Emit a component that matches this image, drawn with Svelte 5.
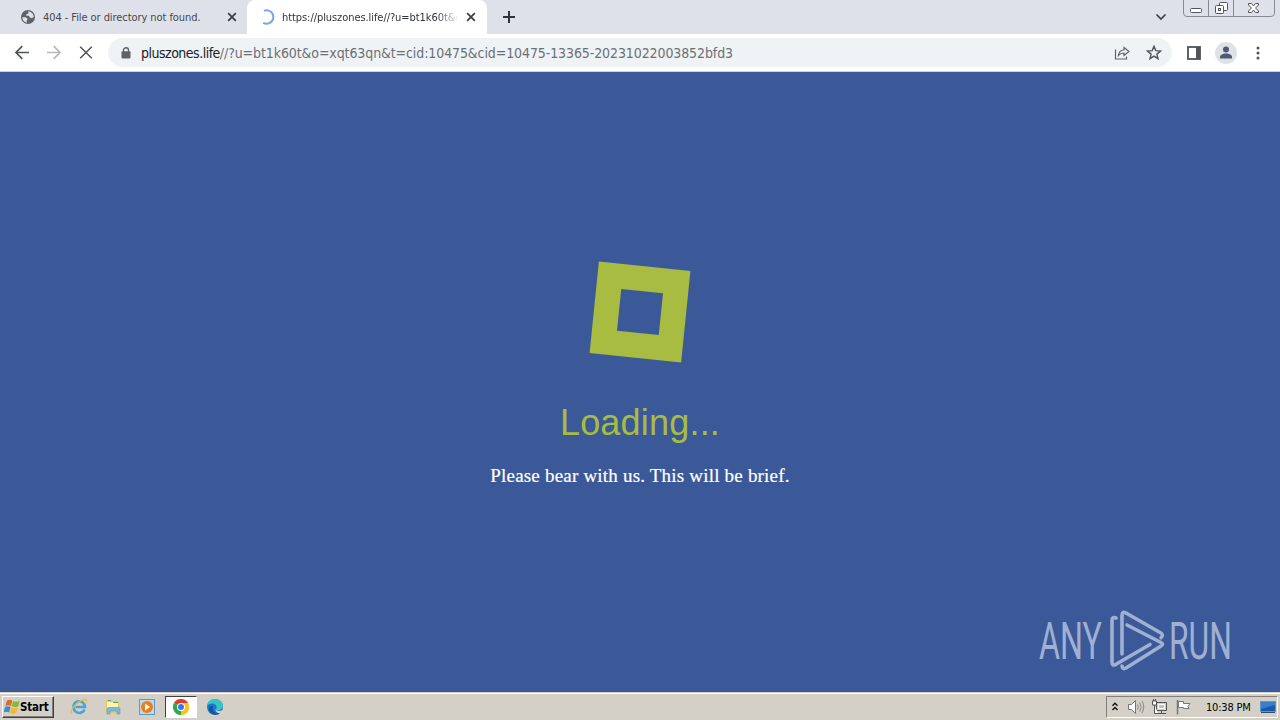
<script>
    let tabs = $state([
        { title: "404 - File or directory not found.", active: false },
        { title: "https://pluszones.life//?u=bt1k60t&o", active: true },
    ])
    let host = "pluszones.life"
    let path = "//?u=bt1k60t&o=xqt63qn&t=cid:10475&cid=10475-13365-20231022003852bfd3"
    let clock = "10:38 PM"
</script>

<main class="screen">
    <header class="tabstrip">
        {#each tabs as tab}
            <div class="tab" class:active={tab.active}>
                {#if tab.active}
                    <svg class="favicon" viewBox="0 0 16 16"><path d="M5 1.700A6.800 6.800 0 1 1 4.200 13.900" fill="none" stroke="#7aa7ea" stroke-width="2" /></svg>
                {:else}
                    <svg class="favicon" viewBox="0 0 16 16">
                        <circle cx="8" cy="8" r="7" fill="#5f6368" />
                        <path d="M2.300 8.200h3.400l2 1.700-1 1.500v2.300C4.100 13.100 2.300 11 2.300 8.200zM8 2.400c3.300 0 5.700 2.500 5.700 5.400l-1.600 1.400-2.200-.7-1-1.800H6.400l-.3-1.300 2.400-1z" fill="#dee1e9" />
                    </svg>
                {/if}
                <span class="title">{tab.title}</span>
                <svg class="close" viewBox="0 0 10 10"><path d="M1.200 1.200l7.600 7.600M8.800 1.200L1.200 8.800" stroke="#3c4043" stroke-width="1.800" /></svg>
            </div>
        {/each}
        <svg class="plus" viewBox="0 0 12 12"><path d="M6 0v12M0 6h12" stroke="#303338" stroke-width="2" /></svg>
        <svg class="chevron" viewBox="0 0 12 8"><path d="M1.500 1.500L6 6l4.500-4.500" fill="none" stroke="#3c4043" stroke-width="1.700" /></svg>
        <svg class="winbuttons" viewBox="0 0 94 17">
            <path d="M1.500 0v13q0 3.500 3.500 3.500h84q3.500 0 3.500-3.500V0M26.500 0v16M51.500 0v16" fill="none" stroke="#868a93" />
            <g fill="#fff" stroke="#50545c">
                <rect x="8.500" y="8.500" width="11" height="4" rx="1" />
                <rect x="37.500" y="2.500" width="8" height="8" rx="1" />
                <rect x="33.500" y="5.500" width="8" height="8" rx="1" />
                <rect x="36.500" y="8.500" width="2" height="2" />
                <path d="M66.500 3.500h3l2 2.500 2-2.500h3v1.500l-3 3 3 3v1.500h-3l-2-2.500-2 2.500h-3v-1.500l3-3-3-3z" />
            </g>
        </svg>
    </header>

    <nav class="toolbar">
        <svg class="nav" viewBox="0 0 16 16"><path d="M15 7.500H2M8.300 1.200L2 7.500l6.300 6.300" fill="none" stroke="#505357" stroke-width="1.700" /></svg>
        <svg class="nav" viewBox="0 0 16 16"><path d="M1 7.500h13M7.700 1.200L14 7.500l-6.300 6.300" fill="none" stroke="#b5b7ba" stroke-width="1.700" /></svg>
        <svg class="nav" viewBox="0 0 16 16"><path d="M2.200 1.700l11.600 11.600M13.800 1.700L2.200 13.300" stroke="#505357" stroke-width="1.500" /></svg>
        <div class="omnibox">
            <svg class="lock" viewBox="0 0 10 12"><path d="M2.500 5V3.300a2.500 2.500 0 0 1 5 0V5" fill="none" stroke="#5f6368" stroke-width="1.400" /><rect x=".5" y="4.300" width="9" height="7.200" rx="1" fill="#5f6368" /></svg>
            <span class="url"><b>{host}</b>{path}</span>
            <svg class="share" viewBox="0 0 16 16"><path d="M1.500 4.500v9.500h11V11.500M4.500 10.500c.4-3.700 2.500-5.400 5.500-5.500V2.500l5 4-5 4V8c-2.500 0-4 .6-5.500 2.500z" fill="none" stroke="#5f6368" stroke-width="1.200" /></svg>
            <svg class="star" viewBox="0 0 16 16"><path d="M8 1.300l1.800 4.300 4.700.4-3.600 3.100 1.100 4.600L8 11.200l-4 2.500 1.100-4.600L1.500 6l4.700-.4z" fill="none" stroke="#505357" stroke-width="1.400" /></svg>
        </div>
        <svg class="panel" viewBox="0 0 14 14"><rect x="1" y="1" width="12" height="12" fill="#fff" stroke="#505357" stroke-width="1.800" /><path d="M9 1h4v12H9z" fill="#505357" /></svg>
        <svg class="avatar" viewBox="0 0 22 22"><circle cx="11" cy="11" r="11" fill="#dee1e6" /><circle cx="11" cy="7.500" r="3" fill="#4c5a78" /><path d="M5 16.500v-1.500c0-2.300 3-3.500 6-3.500s6 1.200 6 3.500v1.500z" fill="#4c5a78" /></svg>
        <svg class="dots" viewBox="0 0 4 14"><g fill="#505357"><circle cx="2" cy="2" r="1.500" /><circle cx="2" cy="7" r="1.500" /><circle cx="2" cy="12" r="1.500" /></g></svg>
    </nav>

    <section class="page">
        <div class="loader"></div>
        <h1>Loading...</h1>
        <p>Please bear with us. This will be brief.</p>
        <svg class="watermark" viewBox="0 0 200 64">
            <g fill="#9fb0d2">
                <text x="1" y="51" textLength="63" lengthAdjust="spacingAndGlyphs">ANY</text>
                <text x="131" y="51" textLength="63" lengthAdjust="spacingAndGlyphs">RUN</text>
            </g>
            <g fill="none" stroke="#9fb0d2" stroke-width="3.600" stroke-linejoin="round" stroke-linecap="round">
                <path d="M78 10q-4-1.500-4 2.500V54q0 4.500 4 2.300L112 36.500" />
                <path d="M84 46V7.500q0-4.500 4-2.500l34.500 19.800q3.500 2.200.5 5" />
                <path d="M89 17l34 17.500q3 1.800 0 3.500L88 60q-3.500 1.800-4-2" />
            </g>
        </svg>
    </section>

    <footer class="taskbar">
        <button class="start">
            <svg viewBox="0 0 16 16">
                <path d="M3 1.500c2-1 3.500-1 5.300 0L6.900 7c-1.900-1-3.400-.9-5.600 0z" fill="#e6672b" />
                <path d="M9 2c2 1.100 4.200 1 6.600 0l-1.500 5.400c-2.100 1-4.300.9-6.400-.1z" fill="#83b83c" />
                <path d="M1 8c2-.9 3.700-.9 5.600 0l-1.500 5.500c-1.800-1-3.400-1-5.400 0z" fill="#3e8bcb" />
                <path d="M7.400 8.400c2 1 4.200 1 6.400.1l-1.500 5.400c-2 1-4.200 1-6.400 0z" fill="#f5b92d" />
            </svg>
            Start
        </button>
        <div class="launch">
            <svg viewBox="0 0 18 18">
                <path d="M14.500 11.500A5.800 5.800 0 1 1 15 9H5.500" fill="none" stroke="#49a3da" stroke-width="2.600" />
                <path d="M1.500 16C-1 13 7 3 14.500 1.500c2.500-.4 2.500 1.500 1.500 3" fill="none" stroke="#e5bd3c" stroke-width="1.300" />
            </svg>
        </div>
        <div class="launch">
            <svg viewBox="0 0 18 18">
                <path d="M2 2h5l1 1h7v12H2z" fill="#e8c95c" />
                <path d="M3 4h11v6H3z" fill="#fff2b4" />
                <path d="M4 2.500h3M9 4.500h5" stroke="#58a86b" />
                <path d="M3 16v-5q0-1.500 1.500-1.500h10Q16 9.500 16 11v5h-3v-3H6v3z" fill="#79b9df" stroke="#5a97ba" stroke-width=".6" />
            </svg>
        </div>
        <div class="launch">
            <svg viewBox="0 0 18 18"><rect x="1.500" y="1.500" width="15" height="15" fill="#b9d9ef" stroke="#5c99c5" /><circle cx="9" cy="9" r="6" fill="#ee7c18" /><path d="M7 5.500v7l5-3.500z" fill="#fff" /></svg>
        </div>
        <div class="launch pressed">
            <svg viewBox="0 0 18 18">
                <circle cx="9" cy="9" r="8" fill="#fbc116" />
                <path d="M9 9L2.070 5A8 8 0 0 1 15.930 5z" fill="#e33b2e" />
                <path d="M9 9v8A8 8 0 0 1 2.070 5z" fill="#2da94f" />
                <path d="M9 5h6.930A8 8 0 0 1 9 17l3.460-6z" fill="#fbc116" />
                <circle cx="9" cy="9" r="4" fill="#fff" />
                <circle cx="9" cy="9" r="3" fill="#3975e4" />
            </svg>
        </div>
        <div class="launch">
            <svg viewBox="0 0 18 18">
                <circle cx="9" cy="9" r="8" fill="#1878c9" />
                <path d="M1.200 7.500C2 3.500 5 1 9 1c5 0 8 3.500 8 6.800 0 2.700-2 4.200-4.500 4.200-2 0-3-.8-2.200-1.800C11.500 8 9.500 5.500 6.500 5.500c-2.300 0-4.200.8-5.300 2z" fill="#38c5c2" />
                <path d="M9.500 10.500c0 2 3 3.200 6.700 1.700l1.800 2-2 1c-4 1-7-1.500-6.500-4.700z" fill="#d4d0c8" />
                <path d="M7 8.500C5.500 12 8.500 16.500 14 15.300 10 18 3 16 3 11c0-3 2.500-3.500 4-2.500z" fill="#15539d" />
            </svg>
        </div>
        <div class="tray">
            <svg class="up" viewBox="0 0 8 10"><path d="M1.500 3.700L4 1.200l2.500 2.500M1.500 8L4 5.500 6.500 8" fill="none" stroke="#111" stroke-width="1.400" /></svg>
            <svg viewBox="0 0 18 16"><path d="M1.500 5.500h3l4-4v13l-4-4h-3z" fill="#fff" stroke="#777" /><path d="M10.500 5.500q1.500 2.500 0 5M12.700 3.500q3 4.500 0 9M15 2q3.500 6 0 12" fill="none" stroke="#888" /></svg>
            <svg viewBox="0 0 18 16">
                <path d="M5.500 3.500h10v8h-10z" fill="#d4d0c8" stroke="#555" />
                <path d="M7.500 5.500h6v4h-6z" fill="#c4c2bc" stroke="#fff" />
                <path d="M10.500 12v2M7 14.500h8" stroke="#555" />
                <path d="M1.500 2v4h4V2zM3.500 6v8.500H7M2.500 0v2M4.500 0v2" fill="#fff" stroke="#555" />
            </svg>
            <svg viewBox="0 0 18 16"><path d="M2.500 1v14.500" stroke="#777" stroke-width="1.500" /><path d="M3.500 2.500h5v2h6.500l-2 3 1 2H8.500V8.500h-5z" fill="#fff" stroke="#777" /></svg>
            <span class="clock">{clock}</span>
            <svg class="desktop" viewBox="0 0 16 14"><path d="M.5 1.500h15v10H.5z" fill="#1859a9" stroke="#6593c4" /><path d="M1 2h14v3L1 9z" fill="#397ec8" /><path d="M1 12.500h14" stroke="#304c70" /></svg>
        </div>
    </footer>
</main>

<style>
    :global(body){
        margin: 0;
        overflow: hidden;
    }
    .screen{
        width: 1280px;
        height: 720px;
        display: flex;
        flex-direction: column;
        font-family: "DejaVu Sans Condensed", "DejaVu Sans", sans-serif;
        font-stretch: condensed;
    }
    svg{
        display: block;
        flex: none;
    }

    .tabstrip{
        height: 34px;
        background: #dee1e9;
        display: flex;
        align-items: center;
    }
    .tab{
        width: 240px;
        height: 34px;
        padding: 0 10px 0 13px;
        margin-left: 7px;
        box-sizing: border-box;
        display: flex;
        align-items: center;
        color: #45484e;
    }
    .tab.active{
        margin-left: 0;
        padding-left: 12px;
        background: #fff;
        border-radius: 8px 8px 0 0;
        color: #303338;
    }
    .favicon{
        width: 16px;
        height: 16px;
    }
    .title{
        width: 175px;
        margin: 0 13px 0 7px;
        font-size: 11px;
        letter-spacing: -0.07px;
        white-space: nowrap;
        overflow: hidden;
    }
    .active .title{
        margin-right: 9px;
        margin-left: 7px;
        mask-image: linear-gradient(to right, #000 155px, transparent 177px);
    }
    .close{
        width: 10px;
        height: 10px;
    }
    .plus{
        width: 12px;
        height: 12px;
        margin-left: 16px;
    }
    .chevron{
        width: 12px;
        height: 8px;
        margin-left: auto;
    }
    .winbuttons{
        width: 94px;
        height: 17px;
        margin: 0 4px 0 15px;
        align-self: flex-start;
    }

    .toolbar{
        height: 37px;
        background: #fff;
        border-bottom: 1px solid #c9d1e2;
        display: flex;
        align-items: center;
        padding-left: 14px;
    }
    .nav{
        width: 16px;
        height: 16px;
        margin-right: 16px;
    }
    .omnibox{
        width: 1064px;
        height: 29px;
        margin-left: -2px;
        padding: 0 10px 0 13px;
        box-sizing: border-box;
        border-radius: 15px;
        background: #f0f3f6;
        display: flex;
        align-items: center;
    }
    .lock{
        width: 10px;
        height: 12px;
    }
    .url{
        margin-left: 10px;
        font-size: 14px;
        letter-spacing: -0.1px;
        color: #6b7075;
        white-space: nowrap;
    }
    .url b{
        font-weight: normal;
        letter-spacing: -0.5px;
        color: #202124;
    }
    .share{
        width: 16px;
        height: 16px;
        margin-left: auto;
    }
    .star{
        width: 16px;
        height: 16px;
        margin-left: 16px;
    }
    .panel{
        width: 14px;
        height: 14px;
        margin-left: 15px;
    }
    .avatar{
        width: 22px;
        height: 22px;
        margin-left: 14px;
    }
    .dots{
        width: 4px;
        height: 14px;
        margin-left: 19px;
    }

    .page{
        height: 620px;
        background: #3b5998;
        position: relative;
        display: flex;
        flex-direction: column;
        align-items: center;
    }
    .loader{
        width: 42px;
        height: 42px;
        margin-top: 194px;
        border: 25px solid #a9bc42;
        transform: rotate(5.8deg);
    }
    h1{
        margin: 44px 0 0;
        font: 36px/41px "Liberation Sans", Arial, sans-serif;
        letter-spacing: 0.2px;
        color: #a9bc42;
    }
    p{
        margin: 22px 0 0;
        font: 19px/22px "Liberation Serif", serif;
        letter-spacing: 0.2px;
        color: #fff;
        -webkit-text-stroke: 0.2px #fff;
    }
    .watermark{
        position: absolute;
        width: 200px;
        height: 64px;
        left: 1038px;
        top: 536px;
    }
    .watermark text{
        font: 400 51px Roboto, sans-serif;
    }

    .taskbar{
        height: 28px;
        box-sizing: border-box;
        background: #d4d0c8;
        border-top: 1px solid #d4d0c8;
        box-shadow: inset 0 1px #fff;
        display: flex;
        align-items: center;
        padding: 1px 2px 0;
    }
    .start{
        width: 52px;
        height: 22px;
        box-sizing: border-box;
        padding: 0 0 0 1px;
        margin-right: 9px;
        border: 1px solid;
        border-color: #fff #404040 #404040 #fff;
        box-shadow: inset -1px -1px #808080;
        background: #d4d0c8;
        display: flex;
        align-items: center;
        font: bold 11.5px "DejaVu Sans Condensed", "DejaVu Sans", sans-serif;
        font-stretch: condensed;
        letter-spacing: -0.2px;
        color: #000;
    }
    .start svg{
        width: 16px;
        height: 16px;
    }
    .launch{
        width: 32px;
        height: 22px;
        margin-right: 2px;
        box-sizing: border-box;
        display: flex;
        align-items: center;
        justify-content: center;
    }
    .launch svg{
        width: 18px;
        height: 18px;
    }
    .pressed{
        border: 1px solid;
        border-color: #404040 #fff #fff #404040;
        background: #fff;
    }
    .tray{
        width: 172px;
        height: 22px;
        margin-left: auto;
        box-sizing: border-box;
        border: 1px solid;
        border-color: #808080 #fff #fff #808080;
        display: flex;
        align-items: center;
        padding-left: 4px;
    }
    .tray svg{
        width: 18px;
        height: 16px;
        margin-right: 6px;
    }
    .tray .up{
        width: 8px;
        height: 10px;
        margin-right: 8px;
    }
    .clock{
        width: 46px;
        margin: 0 8px 0 7px;
        font-size: 11px;
        letter-spacing: -0.2px;
        white-space: nowrap;
        color: #000;
    }
    .tray .desktop{
        width: 16px;
        height: 14px;
        margin: 0;
    }
</style>
